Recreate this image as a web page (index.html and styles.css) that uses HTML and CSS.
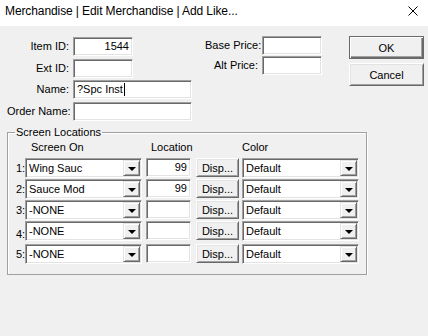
FILE: index.html
```html
<!DOCTYPE html>
<html>
  <head>
    <title>Merchandise | Edit Merchandise | Add Like...</title>
    <link rel="stylesheet" href="styles.css">
  </head>
  <body>
    <div class="titlebar">
      <span class="title">Merchandise | Edit Merchandise | Add Like...</span>
      <svg class="close" width="10" height="10" viewBox="0 0 10 10">
        <path d="M0.5 0.5L9.5 9.5M9.5 0.5L0.5 9.5" stroke="#000" stroke-width="1" fill="none" />
      </svg>
    </div>

    <div class="dialog">
      <div class="top">
        <div class="ids">
          <label>Item ID:</label>
          <div class="field short num">1544</div>
          <label>Ext ID:</label>
          <div class="field short"></div>
          <label>Name:</label>
          <div class="field">?Spc Inst<span class="caret"></span></div>
          <label>Order Name:</label>
          <div class="field"></div>
        </div>

        <div class="prices">
          <label>Base Price:</label>
          <div class="field short"></div>
          <label>Alt Price:</label>
          <div class="field short"></div>
        </div>

        <div class="actions">
          <button class="btn default">OK</button>
          <button class="btn">Cancel</button>
        </div>
      </div>

      <fieldset class="locations">
        <legend>Screen Locations</legend>
        <div class="locRow head">
          <span class="rowNum"></span>
          <span class="colScreen">Screen On</span>
          <span class="colLoc">Location</span>
          <span class="colDisp"></span>
          <span class="colColor">Color</span>
        </div>

        <div class="locRow">
          <span class="rowNum">1:</span>
          <div class="combo"><span class="comboText">Wing Sauc</span><span class="comboBtn"></span></div>
          <div class="field loc num">99</div>
          <button class="btn disp">Disp...</button>
          <div class="combo color"><span class="comboText">Default</span><span class="comboBtn"></span></div>
        </div>
        <div class="locRow">
          <span class="rowNum">2:</span>
          <div class="combo"><span class="comboText">Sauce Mod</span><span class="comboBtn"></span></div>
          <div class="field loc num">99</div>
          <button class="btn disp">Disp...</button>
          <div class="combo color"><span class="comboText">Default</span><span class="comboBtn"></span></div>
        </div>
        <div class="locRow">
          <span class="rowNum">3:</span>
          <div class="combo"><span class="comboText">-NONE</span><span class="comboBtn"></span></div>
          <div class="field loc num"></div>
          <button class="btn disp">Disp...</button>
          <div class="combo color"><span class="comboText">Default</span><span class="comboBtn"></span></div>
        </div>
        <div class="locRow">
          <span class="rowNum low">4:</span>
          <div class="combo"><span class="comboText">-NONE</span><span class="comboBtn"></span></div>
          <div class="field loc num"></div>
          <button class="btn disp">Disp...</button>
          <div class="combo color"><span class="comboText">Default</span><span class="comboBtn"></span></div>
        </div>
        <div class="locRow">
          <span class="rowNum">5:</span>
          <div class="combo"><span class="comboText">-NONE</span><span class="comboBtn"></span></div>
          <div class="field loc num"></div>
          <button class="btn disp">Disp...</button>
          <div class="combo color"><span class="comboText">Default</span><span class="comboBtn"></span></div>
        </div>
      </fieldset>
    </div>
  </body>
</html>
```

FILE: styles.css
```css
body {
  margin: 0;
  font-family: "Liberation Sans", Arial, sans-serif;
  font-size: 11px;
  color: #000;
  background-color: #f0f0f0;
}

.titlebar {
  display: flex;
  align-items: center;
  justify-content: space-between;
  height: 22px;
  padding: 0 10px 4px 5px;
  background-color: #fff;
}

.title {
  font-size: 12px;
  letter-spacing: -0.1px;
}

.dialog {
  padding: 10px 0 0 7px;
}

.top {
  display: flex;
  align-items: flex-start;
}

label {
  text-align: right;
  line-height: 19px;
  white-space: nowrap;
}

/* sunken edit box */
.field {
  box-sizing: border-box;
  height: 19px;
  padding: 0 3px;
  line-height: 16px;
  background-color: #fff;
  border: 1px solid;
  border-color: #a0a0a0 #fff #fff #a0a0a0;
  box-shadow: inset 1px 1px 0 #696969, inset -1px -1px 0 #e3e3e3;
  white-space: nowrap;
  overflow: hidden;
}

.field.short {
  width: 60px;
}

.num {
  text-align: right;
}

.caret {
  display: inline-block;
  width: 1px;
  height: 13px;
  margin-left: 1px;
  vertical-align: -3px;
  background-color: #000;
}

.ids {
  display: grid;
  grid-template-columns: 62px 119px;
  grid-template-rows: 22px 21px 22px 19px;
  column-gap: 4px;
  margin-top: 1px;
}

.prices {
  display: grid;
  grid-template-columns: 53px 60px;
  row-gap: 1px;
  column-gap: 4px;
  margin-left: 13px;
}

.actions {
  display: flex;
  flex-direction: column;
  gap: 4px;
  margin-left: 27px;
}

/* raised push button */
.btn {
  box-sizing: border-box;
  margin: 0;
  padding: 0;
  font-family: inherit;
  font-size: 11px;
  color: #000;
  background-color: #f0f0f0;
  border: 1px solid;
  border-color: #fff #696969 #696969 #fff;
  box-shadow: inset 1px 1px 0 #e3e3e3, inset -1px -1px 0 #a0a0a0;
}

.actions .btn {
  width: 75px;
  height: 23px;
}

.btn.default {
  border-color: #696969;
  box-shadow: inset 1px 1px 0 #fff, inset -1px -1px 0 #696969, inset -2px -2px 0 #a0a0a0;
}

.locations {
  box-sizing: border-box;
  width: 360px;
  margin: 4px 0 0 0;
  padding: 1px 0 9px 8px;
  border: 1px solid #a0a0a0;
  box-shadow: inset 1px 1px 0 #fff, 1px 1px 0 #fff;
}

.locations legend {
  padding: 0 1px;
  margin-left: -1px;
  line-height: 14px;
}

.locRow {
  display: flex;
  align-items: flex-start;
  margin-bottom: 1px;
}

.locRow.head {
  line-height: 14px;
  margin-bottom: 4px;
}

.rowNum {
  width: 9px;
  line-height: 20px;
}

.rowNum.low {
  padding-top: 4px;
  line-height: 18px;
}

.colScreen {
  width: 111px;
  padding-left: 6px;
}

.colLoc {
  width: 40px;
  margin-left: 4px;
  padding-left: 5px;
}

.colDisp {
  width: 43px;
  margin-left: 5px;
}

.colColor {
  margin-left: 3px;
}

/* dropdown combo */
.combo {
  box-sizing: border-box;
  display: flex;
  width: 117px;
  height: 20px;
  padding: 1px;
  background-color: #fff;
  border: 1px solid;
  border-color: #a0a0a0 #fff #fff #a0a0a0;
  box-shadow: inset 1px 1px 0 #696969, inset -1px -1px 0 #e3e3e3;
}

.comboText {
  flex: 1;
  padding-left: 2px;
  line-height: 16px;
  white-space: nowrap;
}

.comboBtn {
  box-sizing: border-box;
  display: flex;
  align-items: center;
  justify-content: center;
  width: 17px;
  height: 16px;
  background-color: #f0f0f0;
  border: 1px solid;
  border-color: #e3e3e3 #696969 #696969 #e3e3e3;
  box-shadow: inset 1px 1px 0 #fff, inset -1px -1px 0 #a0a0a0;
}

.comboBtn::after {
  content: "";
  border-top: 4px solid #000;
  border-left: 4px solid transparent;
  border-right: 4px solid transparent;
  margin-top: 1px;
}

.field.loc {
  width: 45px;
  margin-left: 4px;
}

.btn.disp {
  width: 43px;
  height: 19px;
  margin-left: 5px;
}

.combo.color {
  margin-left: 3px;
}
```
